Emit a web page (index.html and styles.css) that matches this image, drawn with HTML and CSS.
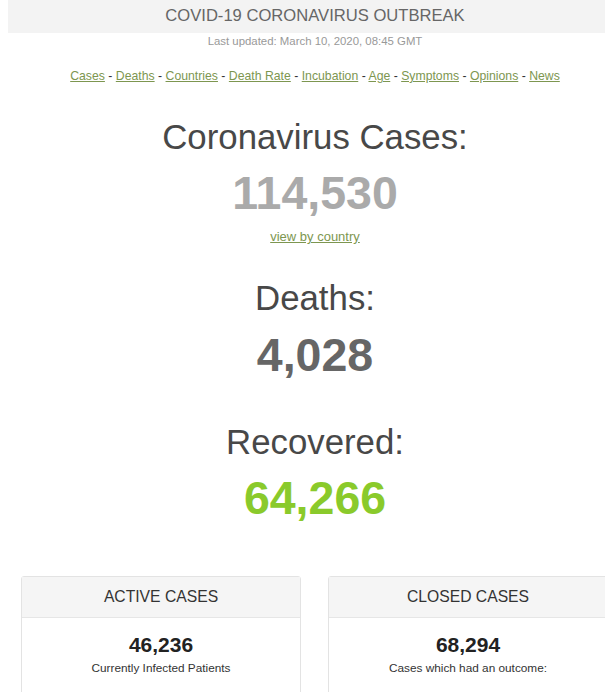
FILE: index.html
```html
<!DOCTYPE html>
<html lang="en">
<head>
<meta charset="utf-8">
<title>COVID-19 Coronavirus Outbreak</title>
<link rel="stylesheet" href="styles.css">
</head>
<body>
<div class="page">
  <div class="topbar">COVID-19 CORONAVIRUS OUTBREAK</div>
  <div class="updated">Last updated: March 10, 2020, 08:45 GMT</div>
  <div class="nav">
    <a href="#">Cases</a> - <a href="#">Deaths</a> - <a href="#">Countries</a> - <a href="#">Death Rate</a> - <a href="#">Incubation</a> - <a href="#">Age</a> - <a href="#">Symptoms</a> - <a href="#">Opinions</a> - <a href="#">News</a>
  </div>

  <div class="counter counter-first">
    <h1 class="counter-title">Coronavirus Cases:</h1>
    <div class="counter-number num-cases">114,530</div>
    <a class="by-country" href="#">view by country</a>
  </div>

  <div class="counter counter-deaths">
    <h1 class="counter-title">Deaths:</h1>
    <div class="counter-number num-deaths">4,028</div>
  </div>

  <div class="counter counter-recovered">
    <h1 class="counter-title">Recovered:</h1>
    <div class="counter-number num-recovered">64,266</div>
  </div>

  <div class="cards">
    <div class="card">
      <div class="card-head">ACTIVE CASES</div>
      <div class="card-body">
        <div class="card-number">46,236</div>
        <div class="card-label">Currently Infected Patients</div>
      </div>
    </div>
    <div class="card">
      <div class="card-head">CLOSED CASES</div>
      <div class="card-body">
        <div class="card-number">68,294</div>
        <div class="card-label">Cases which had an outcome:</div>
      </div>
    </div>
  </div>
</div>
</body>
</html>
```

FILE: styles.css
```css
html, body {
  margin: 0;
  padding: 0;
  overflow: hidden;
  background: #fff;
}

body {
  font-family: "Liberation Sans", Arial, sans-serif;
  color: #333;
}

.page {
  width: 614px;
  margin-left: 8px;
}

.topbar {
  background: #f3f3f3;
  height: 33px;
  line-height: 32px;
  text-align: center;
  font-size: 16.6px;
  color: #666;
}

.updated {
  text-align: center;
  font-size: 11.4px;
  line-height: 16px;
  color: #999;
}

.nav {
  margin-top: 18px;
  text-align: center;
  font-size: 12.25px;
  line-height: 18px;
  color: #333;
}

.nav a,
.by-country {
  color: #7d9650;
  text-decoration: underline;
}

.counter {
  text-align: center;
}

.counter-title {
  margin: 0;
  font-size: 34.8px;
  font-weight: normal;
  line-height: 36px;
  color: #484848;
}

.counter-number {
  margin-top: 13px;
  font-size: 46.5px;
  font-weight: bold;
  line-height: 50px;
}

.counter-first {
  margin-top: 34px;
}

.num-cases {
  color: #aaa;
}

.by-country {
  display: inline-block;
  margin-top: 11px;
  font-size: 13px;
  line-height: 16px;
}

.counter-deaths {
  margin-top: 35px;
}

.num-deaths {
  margin-top: 14px;
  color: #666;
}

.counter-recovered {
  margin-top: 44px;
}

.num-recovered {
  color: #8aca2b;
}

.cards {
  display: flex;
  gap: 27px;
  margin-top: 53px;
  padding: 0 13px;
}

.card {
  width: 280px;
  box-sizing: border-box;
  border: 1px solid #e3e3e3;
  border-radius: 3px;
  height: 140px;
}

.card-head {
  background: #f5f5f5;
  height: 40px;
  line-height: 40px;
  border-bottom: 1px solid #e6e6e6;
  text-align: center;
  font-size: 15.7px;
  color: #333;
}

.card-body {
  padding-top: 15px;
  text-align: center;
}

.card-number {
  font-size: 21px;
  font-weight: bold;
  line-height: 24px;
  color: #222;
}

.card-label {
  margin-top: 3px;
  font-size: 11.8px;
  line-height: 16px;
  color: #333;
}
```
